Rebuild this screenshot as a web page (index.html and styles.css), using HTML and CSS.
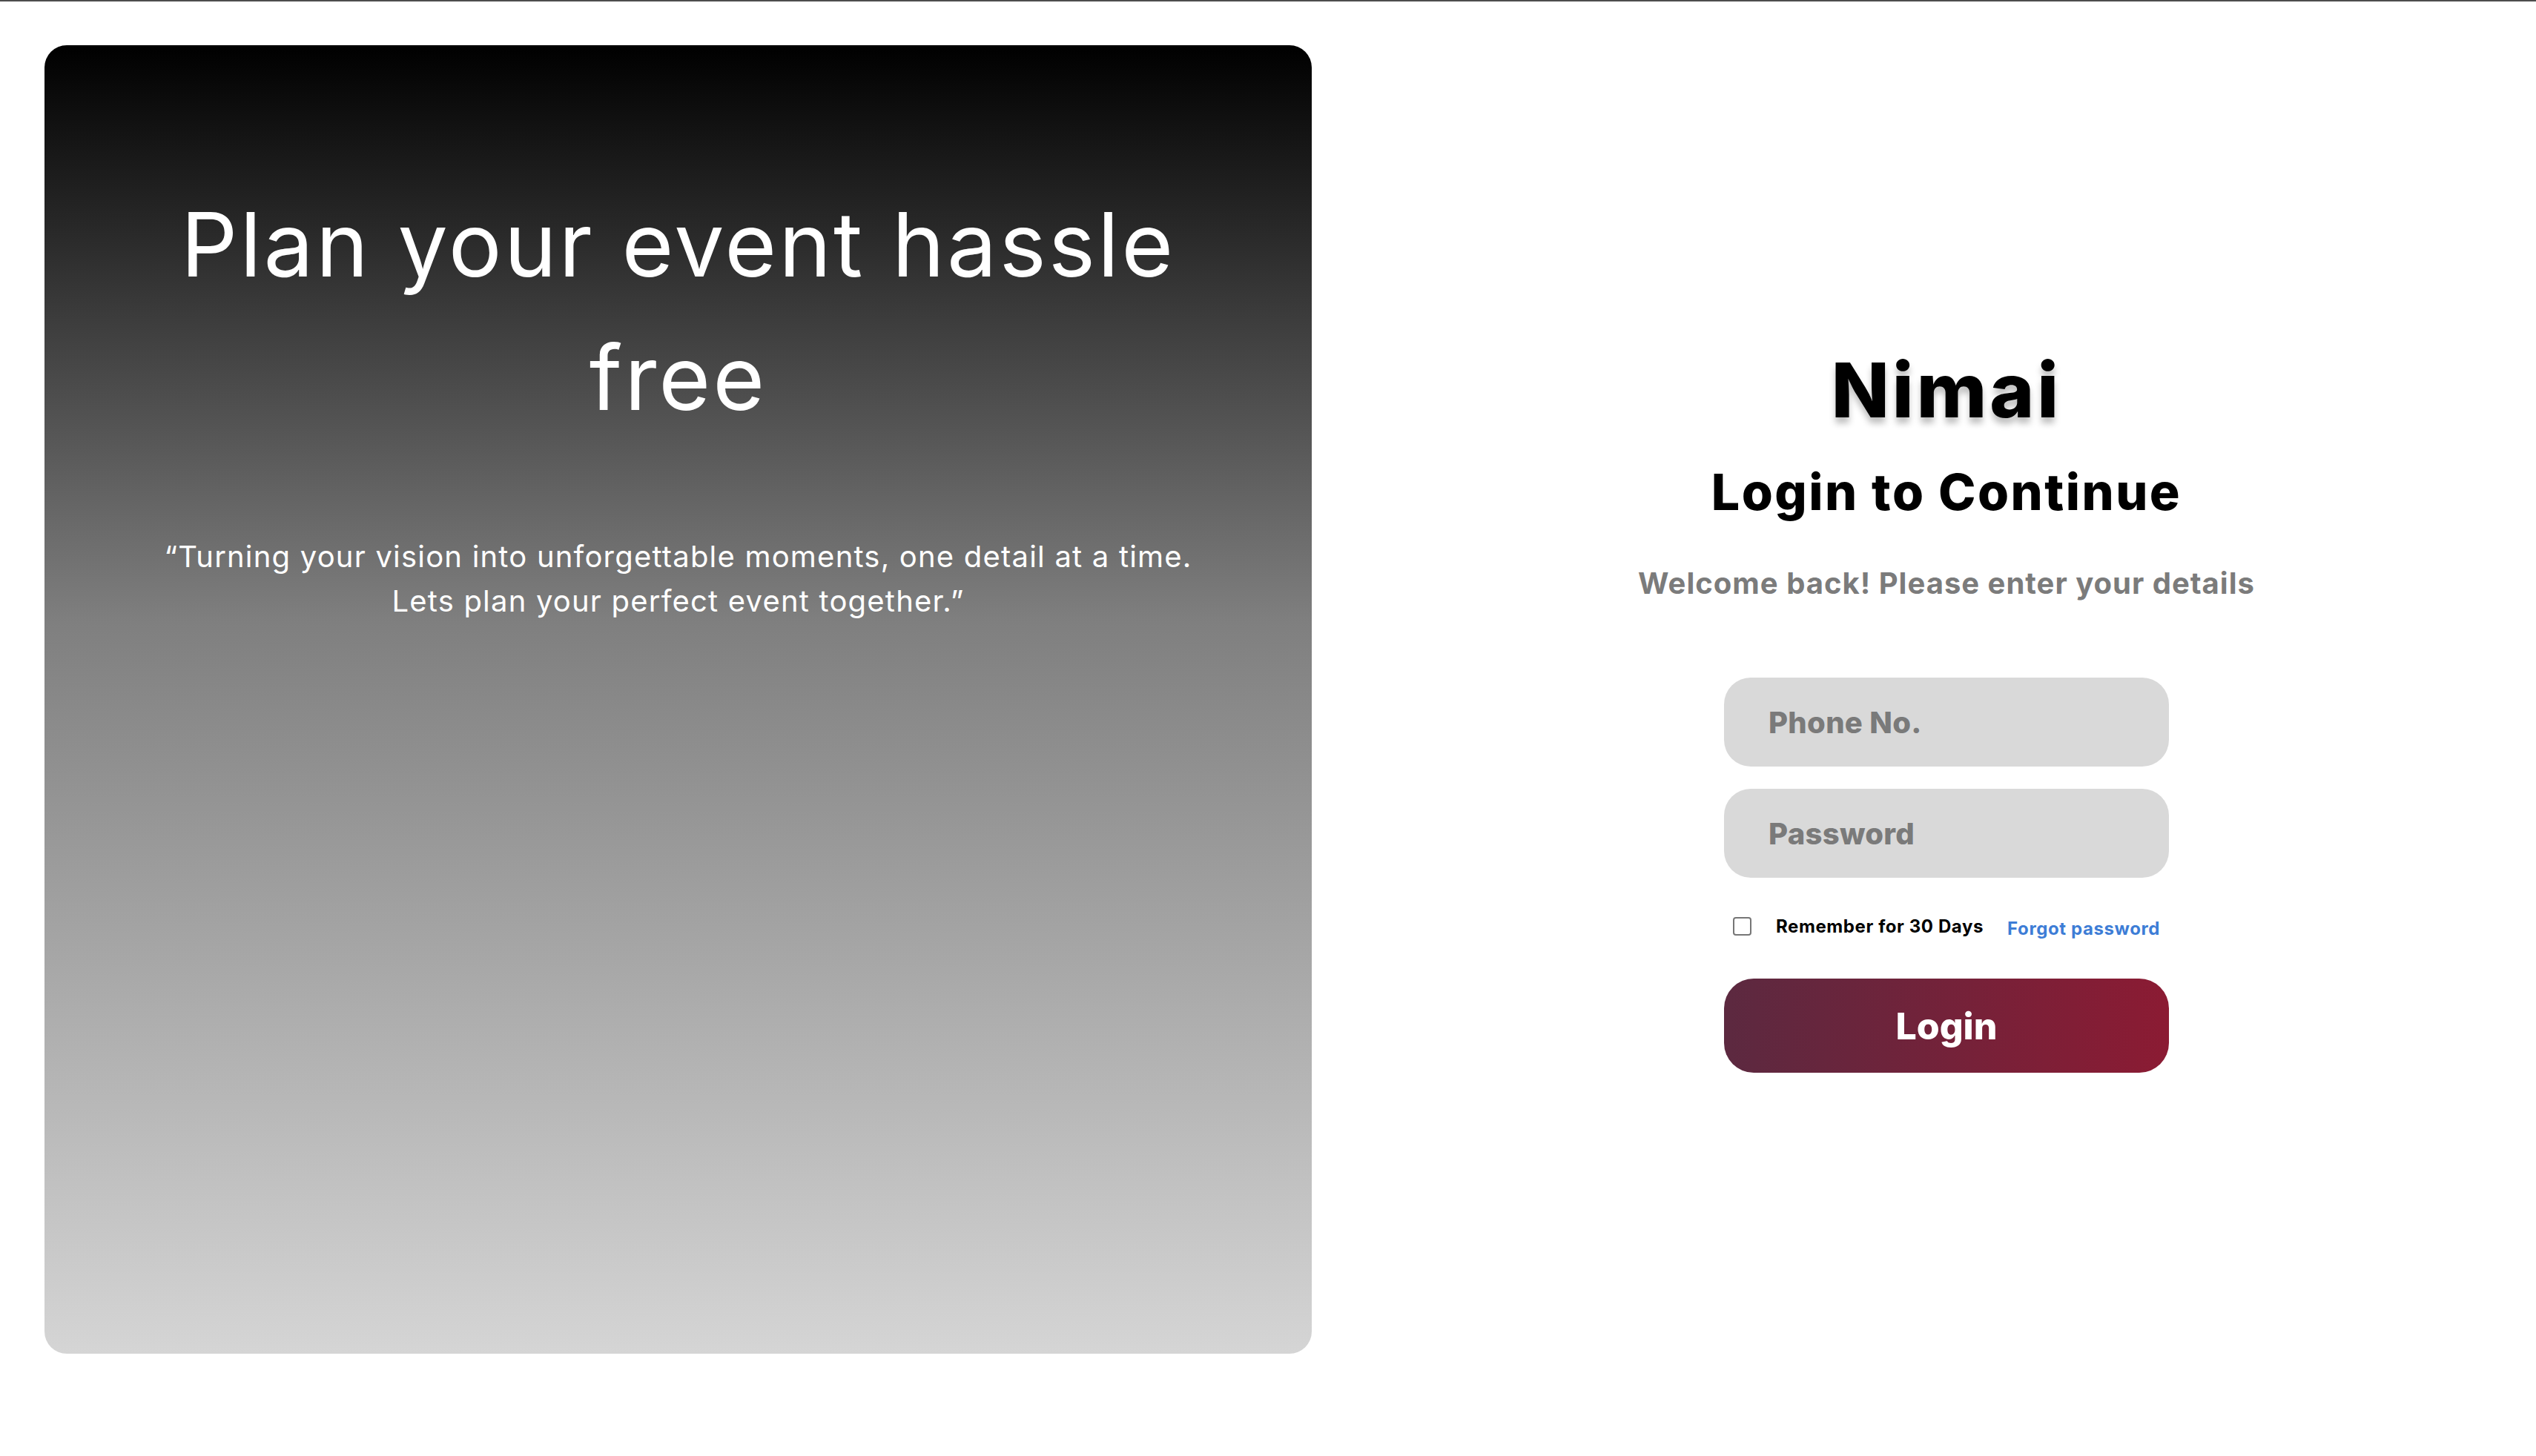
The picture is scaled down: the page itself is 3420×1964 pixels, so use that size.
FILE: index.html
```html
<!DOCTYPE html>
<html lang="en">
<head>
<meta charset="utf-8">
<title>Nimai – Login</title>
<link rel="stylesheet" href="styles.css">
</head>
<body>
<div class="topline"></div>
<main class="page">
  <section class="hero">
    <h1 class="hero-title">Plan your event hassle free</h1>
    <p class="hero-quote">“Turning your vision into unforgettable moments, one detail at a time.<br>Lets plan your perfect event together.”</p>
  </section>
  <section class="auth">
    <h2 class="brand">Nimai</h2>
    <h3 class="auth-title">Login to Continue</h3>
    <p class="auth-sub">Welcome back! Please enter your details</p>
    <form class="auth-form">
      <input class="field" type="tel" placeholder="Phone No.">
      <input class="field" type="password" placeholder="Password">
      <div class="options">
        <label class="remember"><input type="checkbox" class="check"><span>Remember for 30 Days</span></label>
        <a class="forgot" href="#">Forgot password</a>
      </div>
      <button class="login-btn" type="button">Login</button>
    </form>
  </section>
</main>
</body>
</html>
```

FILE: styles.css
```css
html, body {
  margin: 0;
  padding: 0;
  background: #ffffff;
}

body {
  font-family: "Inter", "Liberation Sans", sans-serif;
  color: #000;
}

.topline {
  height: 2px;
  background: #4d4d4d;
}

.page {
  display: flex;
  padding: 59px 0 0 60px;
}

.hero {
  width: 1709px;
  height: 1765px;
  flex: none;
  box-sizing: border-box;
  border-radius: 30px;
  background: linear-gradient(180deg, #000000 0%, #7f7f7f 44%, #d5d5d5 100%);
  padding-top: 179px;
  color: #ffffff;
  text-align: center;
  display: flex;
  flex-direction: column;
  align-items: center;
}

.hero-title {
  margin: 0;
  max-width: 1420px;
  font-size: 120px;
  line-height: 180px;
  font-weight: 400;
  letter-spacing: 3px;
}

.hero-quote {
  margin: 121px 0 0;
  font-size: 40px;
  line-height: 60px;
  font-weight: 400;
  letter-spacing: 1.2px;
}

.auth {
  flex: 1;
  margin-left: 61px;
  padding-top: 404px;
  display: flex;
  flex-direction: column;
  align-items: center;
}

.brand {
  margin: 0;
  font-size: 102px;
  line-height: 122px;
  font-weight: 800;
  letter-spacing: 4px;
  text-shadow: 0 8px 8px rgba(0, 0, 0, 0.25);
}

.auth-title {
  margin: 36px 0 0;
  font-size: 68px;
  line-height: 80px;
  font-weight: 800;
  letter-spacing: 2.5px;
}

.auth-sub {
  margin: 59px 0 0;
  font-size: 40px;
  line-height: 50px;
  font-weight: 700;
  letter-spacing: 1px;
  color: #7b7b7b;
}

.auth-form {
  margin-top: 102px;
  width: 600px;
  display: flex;
  flex-direction: column;
  gap: 30px;
}

.field {
  box-sizing: border-box;
  width: 600px;
  height: 120px;
  border: none;
  border-radius: 36px;
  background: #d9d9d9;
  padding: 0 60px;
  font-family: inherit;
  font-size: 40px;
  font-weight: 800;
  letter-spacing: 0.3px;
  color: #333;
  outline: none;
}

.field::placeholder {
  color: #7a7a7a;
  opacity: 1;
}

.options {
  margin-top: 17px;
  height: 36px;
  display: flex;
  align-items: center;
  justify-content: center;
  gap: 32px;
}

.remember {
  display: flex;
  align-items: center;
  gap: 33px;
  font-size: 24px;
  font-weight: 700;
  letter-spacing: 0.6px;
  color: #000;
}

.check {
  appearance: none;
  -webkit-appearance: none;
  margin: 0;
  width: 25px;
  height: 25px;
  box-sizing: border-box;
  border: 2px solid #767676;
  border-radius: 4px;
  background: #fff;
}

.forgot {
  font-size: 24px;
  font-weight: 700;
  letter-spacing: 0.6px;
  color: #3d7dd6;
  text-decoration: none;
  padding-top: 6px;
}

.login-btn {
  margin-top: 23px;
  width: 600px;
  height: 127px;
  border: none;
  border-radius: 40px;
  background: linear-gradient(90deg, #5c2940 0%, #8b1b33 100%);
  color: #fff;
  font-family: inherit;
  font-size: 50px;
  font-weight: 800;
  cursor: pointer;
}
```
